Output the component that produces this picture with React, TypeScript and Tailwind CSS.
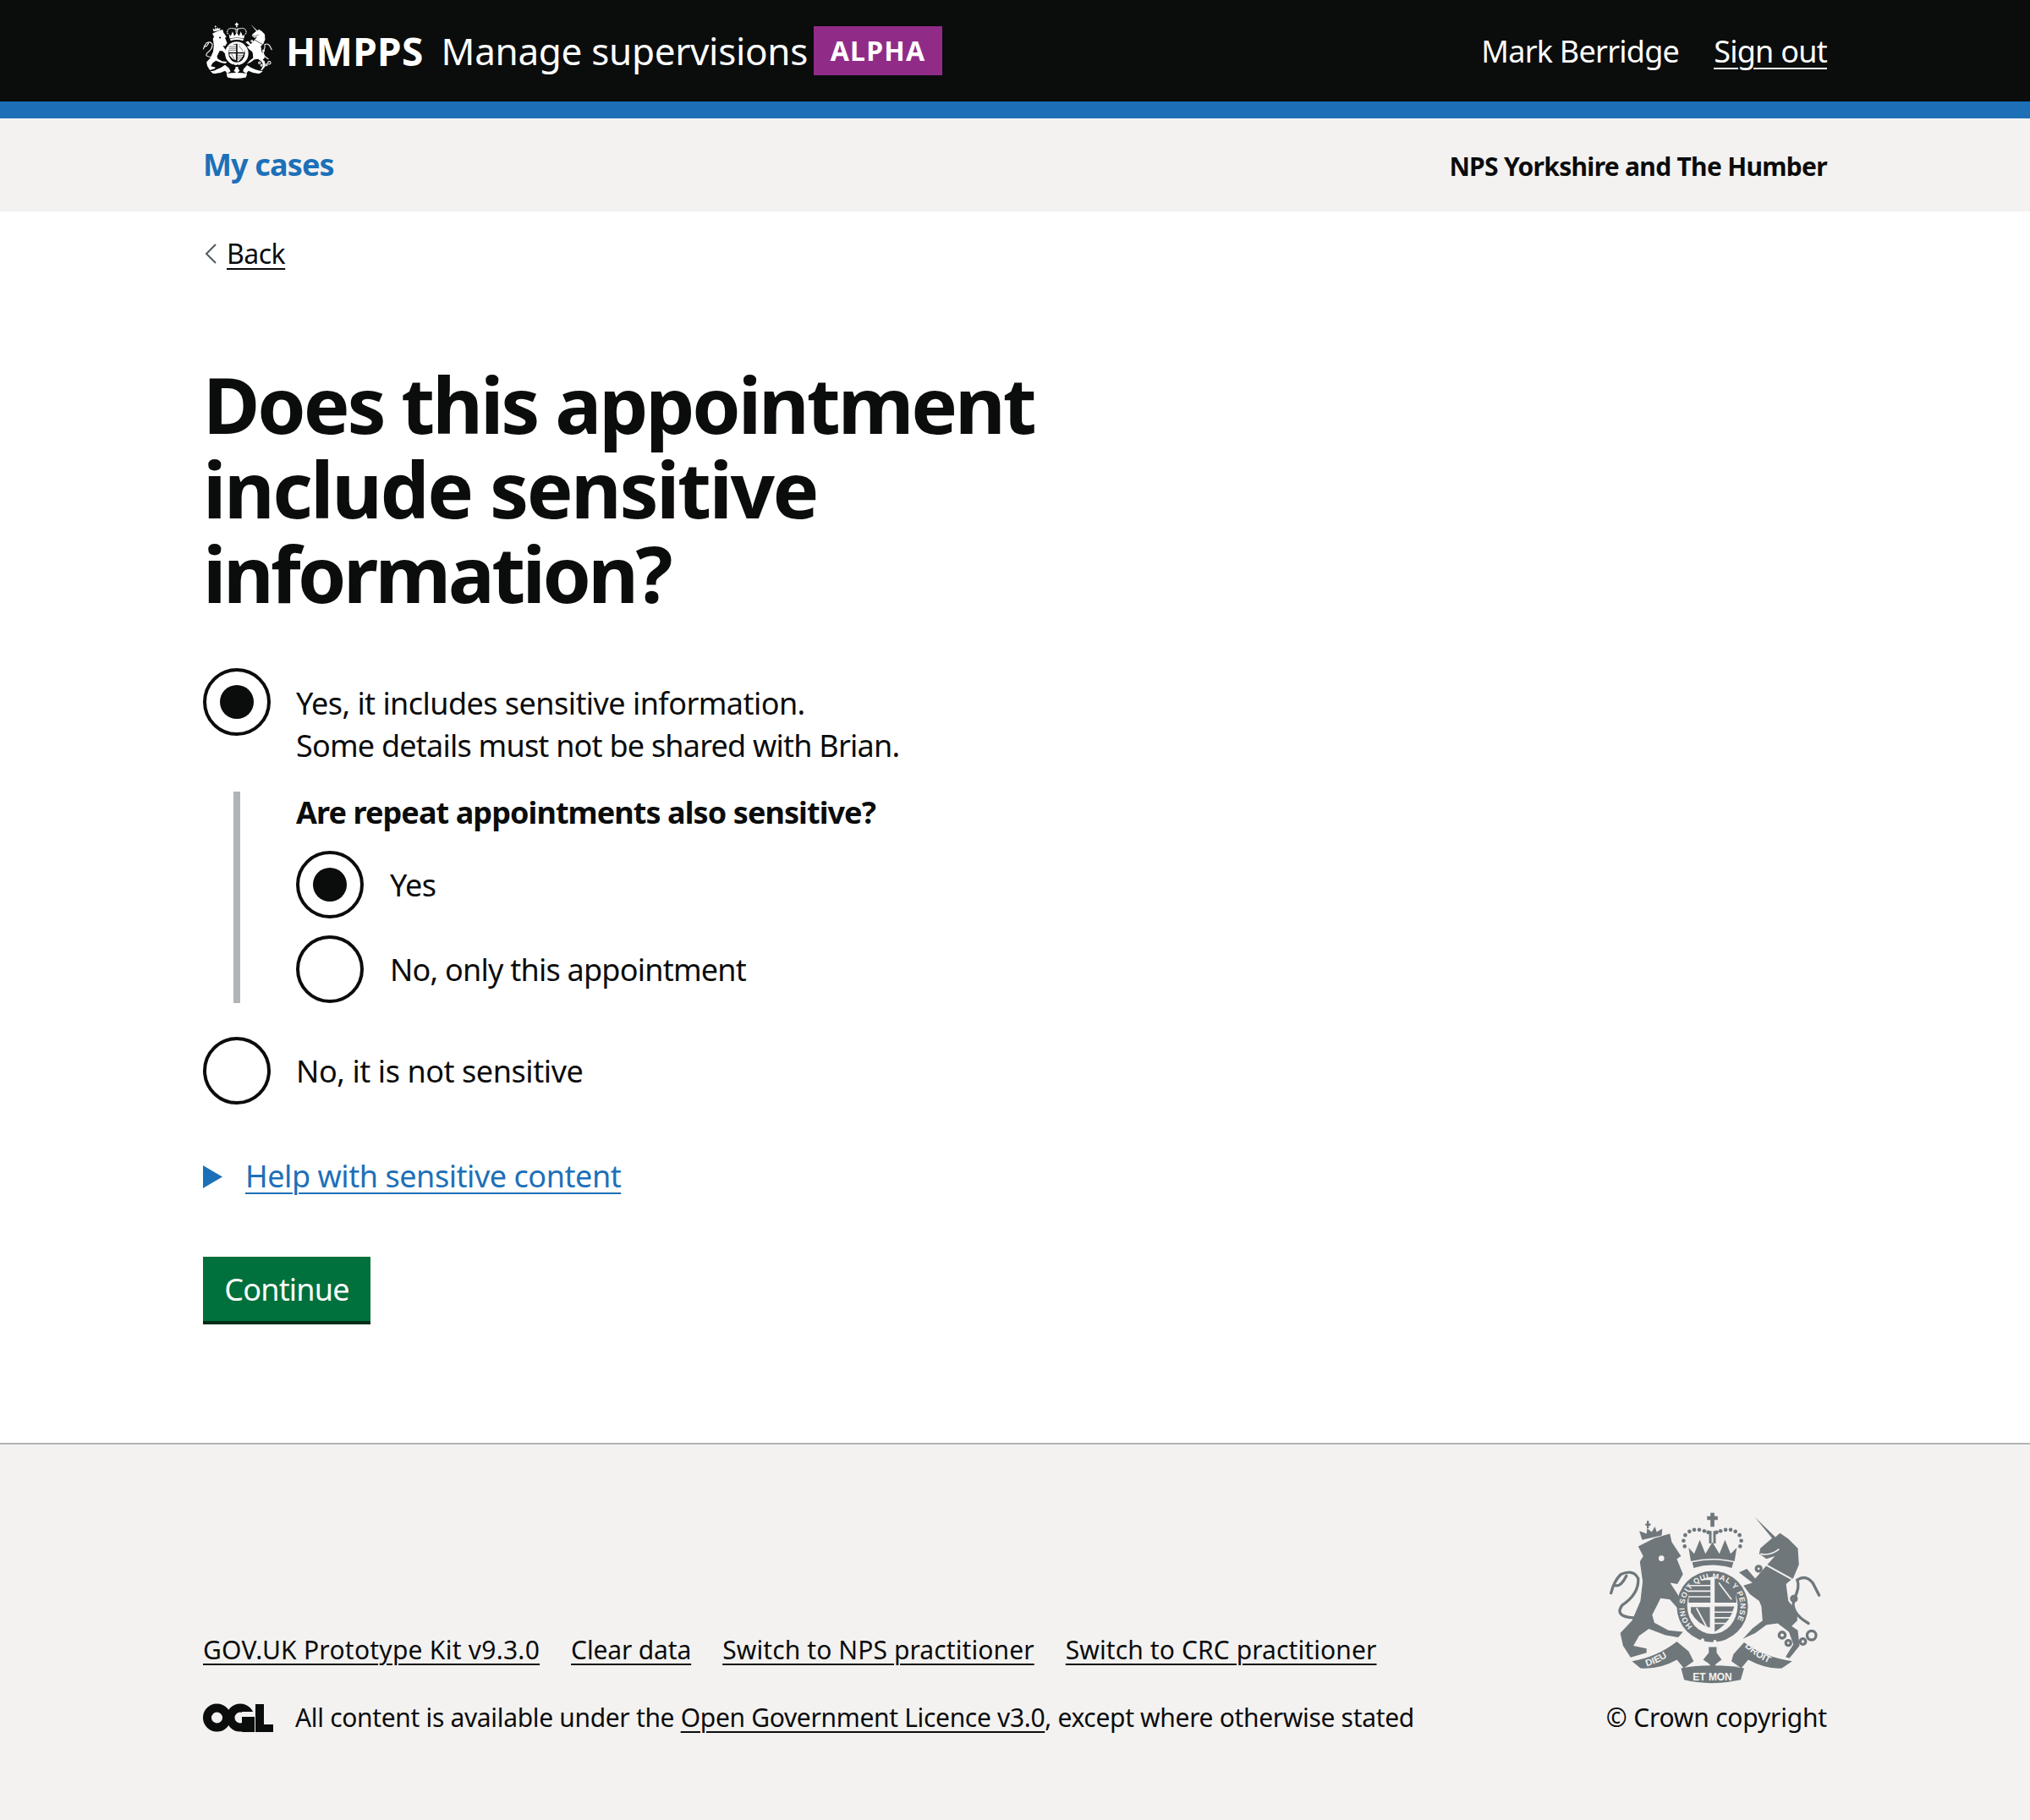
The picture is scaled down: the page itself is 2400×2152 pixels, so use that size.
function Crest({ color, knockout, className, lettered = false }: { color: string; knockout: string; className: string; lettered?: boolean }) {
  return (
    <svg viewBox="130 85 755 612" className={className} role="img" aria-label="Royal coat of arms">
      <g fill={color}>
        {/* lion crown */}
        <path d="M246 182 L236 150 L262 160 L264 140 L280 154 L292 134 L298 154 L318 142 L316 166 Z" />
        <path d="M258 124 H263 V114 H270 V124 H276 V131 H270 V140 H263 V131 H258 Z" />
        {/* lion */}
        <path d="M232 205 L290 176 L345 160 L352 190 L385 240 L370 250 L392 305 L372 340 L346 335 L385 395 L408 432 L385 440 L345 395 L312 390 L282 450 L290 478 L340 505 L392 510 L375 530 L330 522 L270 500 L235 525 L215 560 L262 570 L262 585 L205 602 L178 560 L168 515 L210 470 L240 400 L248 330 L238 260 L250 240 Z" />
        {/* unicorn */}
        <path d="M648 100 L722 172 L738 158 L768 178 L802 212 L806 270 L786 318 L760 340 L768 400 L800 440 L800 470 L780 490 L802 505 L808 560 L772 605 L758 600 L786 555 L770 510 L730 480 L690 485 L650 515 L606 535 L640 498 L676 470 L672 420 L664 400 L630 375 L608 345 L640 335 L592 298 L620 285 L650 320 L680 285 L720 240 L690 250 L664 232 L668 212 L710 176 Z" />
        {/* big crown */}
        <path d="M490 85 H504 V97 H516 V111 H504 V135 H490 V111 H478 V97 H490 Z" />
        <path d="M485 150 H494 V195 H485 Z M500 150 H509 V195 H500 Z" />
        <path d="M412 210 L432 232 L452 182 L472 232 L497 190 L522 232 L542 182 L562 232 L584 210 L576 258 Q497 240 420 258 Z" />
        <path d="M425 262 Q497 245 572 262 L566 282 Q497 262 430 282 Z" />
        {/* scroll and fleur */}
        <path d="M210 615 Q300 600 370 545 L412 580 L430 615 L395 640 L370 610 Q310 645 240 640 Z" />
        <path d="M782 615 Q680 600 610 548 L572 590 L565 615 L600 640 L625 610 Q690 645 745 640 Z" />
        <path d="M385 640 Q490 620 610 640 L598 682 Q490 705 396 682 Z" />
        <path d="M484 565 H512 V585 L530 610 L510 625 L498 645 L486 625 L464 610 L484 585 Z" />
      </g>
      <circle cx="315" cy="248" r="10" fill={knockout} />
      <path d="M668 232 Q705 240 735 215" fill="none" stroke={knockout} strokeWidth="5" />
      {/* tails, collar and chain */}
      <g fill="none" stroke={color} strokeWidth="10" strokeLinecap="round">
        <path d="M215 460 Q145 455 175 415 Q235 375 232 320 Q215 285 170 305 Q145 330 135 372" />
        <path d="M840 480 Q770 440 790 390 Q810 350 800 325 Q830 305 855 335 L878 380" />
        <path d="M150 345 Q170 350 190 310" />
        <circle cx="662" cy="285" r="9" />
        <circle cx="654" cy="368" r="10" />
        <circle cx="746" cy="522" r="11" />
        <circle cx="768" cy="550" r="9" />
        <circle cx="820" cy="545" r="10" />
        <circle cx="851" cy="523" r="16" />
        <circle cx="788" cy="392" r="9" />
      </g>
      <path d="M690 272 L780 322" fill="none" stroke={knockout} strokeWidth="6" />
      {/* crown pearls */}
      <g fill={color}>
        {[[398, 205], [394, 185], [400, 165], [415, 152], [432, 146], [450, 146], [468, 150], [482, 155], [512, 155], [526, 150], [544, 146], [562, 146], [579, 152], [594, 165], [600, 185], [596, 205]].map(([cx, cy]) => (
          <circle key={`${cx}-${cy}`} cx={cx} cy={cy} r="7" />
        ))}
      </g>
      {/* garter and shield */}
      <circle cx="497" cy="420" r="127" fill={color} />
      <ellipse cx="497" cy="416" rx="90" ry="102" fill={knockout} />
      <g fill={color}>
        <path d="M414 325 H490 V406 H412 Z" />
        <path d="M505 316 Q550 322 578 352 L583 406 H505 Z" />
        <path d="M420 422 H488 V495 Q445 485 420 440 Z" />
        <path d="M505 420 H575 Q560 480 505 510 Z" />
      </g>
      <g stroke={knockout} strokeWidth="5">
        <path d="M412 345 H490 M412 365 H490 M412 385 H490" />
        <path d="M505 440 H575 M505 460 H570 M505 480 H550" />
        <path d="M520 335 L565 395 M440 425 L475 490" />
      </g>
      <circle cx="462" cy="540" r="6" fill={knockout} />
      <circle cx="506" cy="545" r="6" fill={knockout} />
      {lettered && (
        <g fill={knockout} fontFamily="'Liberation Sans', sans-serif" fontWeight="700">
          <path id="garter" d="M426 491 A100 100 0 1 1 568 491" fill="none" />
          <text fontSize="27">
            <textPath href="#garter" textLength="440">HONI SOIT QUI MAL Y PENSE</textPath>
          </text>
          <path id="dieu" d="M262 634 Q325 617 372 570" fill="none" />
          <path id="droit" d="M612 562 Q660 612 735 636" fill="none" />
          <text fontSize="34">
            <textPath href="#dieu">DIEU</textPath>
          </text>
          <text fontSize="34">
            <textPath href="#droit">DROIT</textPath>
          </text>
          <text x="497" y="684" textAnchor="middle" fontSize="36">ET MON</text>
        </g>
      )}
    </svg>
  );
}

function OglLogo() {
  return (
    <svg viewBox="0 0 83 34" className="h-[34px] w-[83px] shrink-0" role="img" aria-label="OGL">
      <circle cx="16.5" cy="17" r="11.5" fill="none" stroke="#0b0c0c" strokeWidth="10" />
      <circle cx="44" cy="17" r="11.5" fill="none" stroke="#0b0c0c" strokeWidth="10" />
      <rect x="46" y="10" width="16" height="6" fill="#f3f2f1" />
      <rect x="46" y="16" width="15" height="18" fill="#0b0c0c" />
      <rect x="62" y="1" width="10" height="33" fill="#0b0c0c" />
      <rect x="62" y="25" width="21" height="9" fill="#0b0c0c" />
    </svg>
  );
}

function Radio({ checked = false }: { checked?: boolean }) {
  return (
    <span className="flex size-20 shrink-0 items-center justify-center rounded-full border-[4px] border-[#0b0c0c] bg-white">
      {checked && <span className="size-10 rounded-full bg-[#0b0c0c]" />}
    </span>
  );
}

const footerLinks = [
  { label: "GOV.UK Prototype Kit v9.3.0", tracking: "tracking-[0.25px]" },
  { label: "Clear data", tracking: "tracking-[-0.15px]" },
  { label: "Switch to NPS practitioner", tracking: "tracking-[0.1px]" },
  { label: "Switch to CRC practitioner", tracking: "tracking-[0.1px]" },
];

export default function App() {
  return (
    <div className="flex min-h-screen flex-col bg-white font-['Noto_Sans',sans-serif] text-[#0b0c0c]">
      <header className="h-[120px] bg-[#0b0c0c] text-white">
        <div className="mx-auto flex h-full w-[1920px] items-center justify-between">
          <div className="flex items-center">
            <Crest color="#ffffff" knockout="#0b0c0c" className="h-[68px] w-[82px]" />
            <span className="ml-4 text-[46px] leading-none font-bold tracking-[0.3px]">HMPPS</span>
            <span className="ml-[21px] text-[44px] leading-none tracking-[-0.3px]">Manage supervisions</span>
            <span className="ml-[7px] flex h-[58px] w-[152px] items-center justify-center bg-[#912b88] text-[32px] font-bold tracking-[1.2px]">ALPHA</span>
          </div>
          <div className="flex items-center gap-[41px] pt-[2px] text-[36px] tracking-[-0.75px]">
            <span>Mark Berridge</span>
            <a href="#" className="underline decoration-2 underline-offset-[6px]">Sign out</a>
          </div>
        </div>
      </header>
      <div className="h-5 bg-[#1d70b8]" />
      <nav className="h-[110px] bg-[#f3f2f1]">
        <div className="mx-auto flex h-full w-[1920px] items-center justify-between">
          <a href="#" className="text-[36px] font-bold tracking-[-0.85px] text-[#1d70b8]">My cases</a>
          <span className="mt-[2px] text-[30px] font-bold tracking-[-0.7px]">NPS Yorkshire and The Humber</span>
        </div>
      </nav>

      <main className="mx-auto w-[1920px]">
        <a href="#" className="mt-[30px] flex h-10 items-center text-[32px] tracking-[-0.5px]">
          <svg viewBox="0 0 14 24" className="mr-3 ml-[2px] h-6 w-[14px]" fill="none" stroke="#505a5f" strokeWidth="2">
            <path d="M13 1 L2 12 L13 23" />
          </svg>
          <span className="underline decoration-2 underline-offset-[5px]">Back</span>
        </a>

        <h1 className="mt-[108px] text-[92px] leading-[100px] font-bold">
          <span className="block tracking-[-3.1px]">Does this appointment</span>
          <span className="block tracking-[-2.5px]">include sensitive</span>
          <span className="block tracking-[-3.6px]">information?</span>
        </h1>

        <div className="mt-[62px] flex gap-[30px]">
          <Radio checked />
          <p className="mt-[17px] text-[36px] leading-[50px]">
            <span className="tracking-[-0.55px]">Yes, it includes sensitive information.</span>
            <br />
            <span className="tracking-[-0.78px]">Some details must not be shared with Brian.</span>
          </p>
        </div>

        <section className="mt-[29px] ml-9 border-l-8 border-[#b1b4b6] pl-[66px]">
          <h2 className="text-[36px] leading-[50px] font-bold tracking-[-0.92px]">Are repeat appointments also sensitive?</h2>
          <div className="mt-5 flex items-center gap-[31px]">
            <Radio checked />
            <span className="pt-[2px] text-[36px] tracking-[-0.6px]">Yes</span>
          </div>
          <div className="mt-5 flex items-center gap-[31px]">
            <Radio />
            <span className="pt-[2px] text-[36px] tracking-[-0.77px]">No, only this appointment</span>
          </div>
        </section>

        <div className="mt-10 flex items-center gap-[30px]">
          <Radio />
          <span className="pt-[2px] text-[36px] tracking-[-0.43px]">No, it is not sensitive</span>
        </div>

        <div className="mt-[60px] flex h-[50px] items-center">
          <svg viewBox="0 0 23 27" className="h-[27px] w-[23px]" fill="#1d70b8">
            <path d="M0 0 L23 13.5 L0 27 Z" />
          </svg>
          <a href="#" className="ml-[27px] text-[36px] tracking-[-0.45px] text-[#1d70b8] underline decoration-2 underline-offset-[6px]">
            Help with sensitive content
          </a>
        </div>

        <button className="mt-[70px] block h-[76px] w-[198px] bg-[#00703c] pt-[2px] text-[36px] tracking-[-0.8px] text-white shadow-[0_4px_0_#002d18]">
          Continue
        </button>
      </main>

      <footer className="mt-[144px] flex-1 border-t-2 border-[#b1b4b6] bg-[#f3f2f1]">
        <div className="mx-auto flex w-[1920px] items-end justify-between pt-[79px]">
          <div className="text-[30px] leading-10">
            <div className="flex gap-[37px]">
              {footerLinks.map((link) => (
                <a key={link.label} href="#" className={`${link.tracking} underline decoration-2 underline-offset-[5px]`}>{link.label}</a>
              ))}
            </div>
            <div className="mt-10 flex items-center gap-[26px]">
              <OglLogo />
              <p className="tracking-[-0.33px]">
                All content is available under the{" "}
                <a href="#" className="underline decoration-2 underline-offset-[5px]">Open Government Licence v3.0</a>
                , except where otherwise stated
              </p>
            </div>
          </div>
          <div className="flex flex-col items-end">
            <Crest color="#6f777b" knockout="#f3f2f1" lettered className="mr-[7px] h-[206px] w-[250px]" />
            <span className="mt-[18px] text-[30px] leading-10 tracking-[-0.2px]">© Crown copyright</span>
          </div>
        </div>
      </footer>
    </div>
  );
}
